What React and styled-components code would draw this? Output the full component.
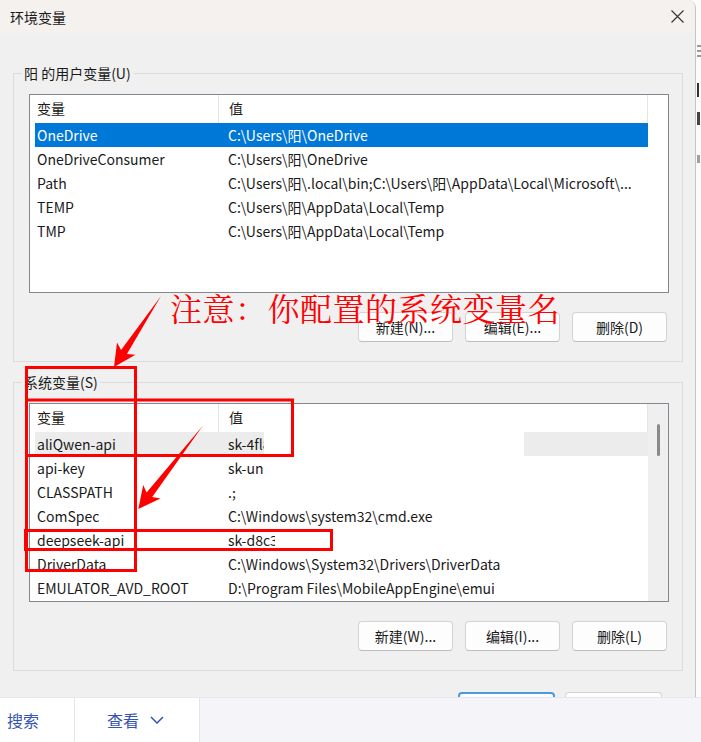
import React from "react";
import styled, { createGlobalStyle } from "styled-components";

const GlobalStyle = createGlobalStyle`
  html, body { margin: 0; padding: 0; }
  body {
    width: 701px;
    height: 742px;
    overflow: hidden;
    background: #ffffff;
    font-family: "Noto Sans CJK SC", "Noto Sans", sans-serif;
    color: #1a1a1a;
  }
  * { box-sizing: border-box; }
`;

const Page = styled.div`
  position: relative;
  width: 701px;
  height: 742px;
  display: flex;
  flex-direction: column;
  overflow: hidden;
`;

const TopRow = styled.div`
  display: flex;
  height: 697px;
  overflow: hidden;
`;

const Dialog = styled.div`
  width: 696px;
  background: #f0f0f0;
  border-right: 1px solid #c4c4c4;
  border-top-right-radius: 8px;
  display: flex;
  flex-direction: column;
  overflow: hidden;
`;

const TitleBar = styled.div`
  height: 33px;
  flex: none;
  background: #f4f1ef;
  display: flex;
  align-items: center;
  justify-content: space-between;
  padding: 0 10px 0 10px;
  font-size: 14px;
`;

const CloseIcon = styled.svg`
  width: 13px;
  height: 13px;
  margin-right: 1px;
`;

const Body = styled.div`
  padding: 30px 12px 0 13px;
  display: flex;
  flex-direction: column;
`;

const Group = styled.fieldset`
  width: 670px;
  margin: ${(p) => (p.$first ? "0" : "10px 0 0 0")};
  padding: 11px 13px 19px 15px;
  border: 1px solid #dcdcdc;
  min-width: 0;
`;

const Legend = styled.legend`
  font-size: 14px;
  line-height: 20px;
  padding: 0 2px;
  margin-left: -7px;
  color: #1a1a1a;
`;

const List = styled.div`
  width: 640px;
  height: 199px;
  border: 1px solid #828790;
  background: #ffffff;
  display: flex;
  overflow: hidden;
`;

const ListBody = styled.div`
  flex: 1;
  padding-left: 5px;
  display: flex;
  flex-direction: column;
`;

const Track = styled.div`
  width: 20px;
  flex: none;
  background: ${(p) => (p.$visible ? "#efefef" : "#ffffff")};
  display: flex;
  justify-content: center;
  padding-top: 20px;
`;

const Thumb = styled.div`
  width: 3px;
  height: 32px;
  border-radius: 2px;
  background: #8a8a8a;
  margin-left: 1px;
`;

const HeaderRow = styled.div`
  display: grid;
  grid-template-columns: 184px 429px;
  height: 28px;
  flex: none;
`;

const HeaderCell = styled.div`
  display: flex;
  align-items: center;
  padding-left: ${(p) => (p.$value ? "10px" : "2px")};
  padding-bottom: 2px;
  border-right: 1px solid #e5e5e5;
  font-size: 14px;
`;

const Row = styled.div`
  display: grid;
  grid-template-columns: 184px 429px;
  height: 24px;
  flex: none;
  align-items: center;
  font-size: 14px;
  background: ${(p) => (p.$selected ? "#0078d7" : p.$hover ? "#ececec" : "transparent")};
  color: ${(p) => (p.$selected ? "#ffffff" : "#1a1a1a")};
`;

const NameCell = styled.div`
  padding-left: 2px;
  white-space: nowrap;
  overflow: hidden;
`;

const ValueCell = styled.div`
  padding-left: 9px;
  white-space: nowrap;
  overflow: hidden;
  display: flex;
  align-items: center;
  height: 100%;
`;

const Clip = styled.span`
  display: inline-block;
  overflow: hidden;
  white-space: nowrap;
  width: ${(p) => p.$w}px;
  flex: none;
`;

const Mask = styled.span`
  display: block;
  width: 260px;
  height: 100%;
  background: #ffffff;
  flex: none;
`;

const ButtonRow = styled.div`
  display: flex;
  justify-content: flex-end;
  gap: ${(p) => p.$gap || 12}px;
  margin-top: ${(p) => p.$mt || 19}px;
  padding-right: ${(p) => p.$pr || 2}px;
`;

const Button = styled.button`
  width: ${(p) => p.$w || 95}px;
  height: 30px;
  background: #fdfdfd;
  border: ${(p) => (p.$primary ? "2px solid #4a9ae0" : "1px solid #d3d3d3")};
  border-bottom-color: ${(p) => (p.$primary ? "#4a9ae0" : "#bdbdbd")};
  border-radius: 4px;
  font-family: inherit;
  font-size: 14px;
  color: #1a1a1a;
  padding: 0;
`;

const BackStrip = styled.div`
  width: 5px;
  flex: none;
  background: #fbfbfb;
  display: flex;
  flex-direction: column;
  padding-left: 1px;
`;

const Frag = styled.div`
  margin-top: ${(p) => p.$mt}px;
  height: ${(p) => p.$h}px;
  width: ${(p) => p.$w}px;
  background: ${(p) => p.$c};
  flex: none;
`;

const BottomBar = styled.div`
  height: 45px;
  flex: none;
  display: flex;
  background: #f5f5f9;
  border-top: 1px solid #e6e6ec;
`;

const BarCell = styled.div`
  width: ${(p) => p.$w}px;
  padding-left: ${(p) => p.$pl}px;
  background: #ffffff;
  border-right: 1px solid #e6e6e6;
  display: flex;
  align-items: center;
  font-size: 16px;
  color: #3653b3;
  flex: none;
`;

const Chevron = styled.svg`
  width: 14px;
  height: 8px;
  margin-left: 11px;
`;

const Overlay = styled.svg`
  position: absolute;
  left: 0;
  top: 0;
  width: 701px;
  height: 742px;
  pointer-events: none;
`;

const Note = styled.div`
  position: absolute;
  left: 170px;
  top: 289px;
  font-size: 32px;
  line-height: 36px;
  letter-spacing: 0.5px;
  color: #ff0000;
  white-space: nowrap;
  font-family: "Noto Serif CJK SC", "Noto Sans CJK SC", serif;
  text-shadow: 0 0 1px #ffffff;
  pointer-events: none;
`;

const userVars = [
  { name: "OneDrive", value: "C:\\Users\\阳\\OneDrive", selected: true },
  { name: "OneDriveConsumer", value: "C:\\Users\\阳\\OneDrive" },
  { name: "Path", value: "C:\\Users\\阳\\.local\\bin;C:\\Users\\阳\\AppData\\Local\\Microsoft\\..." },
  { name: "TEMP", value: "C:\\Users\\阳\\AppData\\Local\\Temp" },
  { name: "TMP", value: "C:\\Users\\阳\\AppData\\Local\\Temp" },
];

const sysVars = [
  { name: "aliQwen-api", value: "sk-4fl8", hover: true, clip: 36, mask: true },
  { name: "api-key", value: "sk-un3", clip: 36 },
  { name: "CLASSPATH", value: ".;" },
  { name: "ComSpec", value: "C:\\Windows\\system32\\cmd.exe" },
  { name: "deepseek-api", value: "sk-d8c3", clip: 47 },
  { name: "DriverData", value: "C:\\Windows\\System32\\Drivers\\DriverData" },
  { name: "EMULATOR_AVD_ROOT", value: "D:\\Program Files\\MobileAppEngine\\emui" },
];

function VarList({ rows, scroll }) {
  return (
    <List>
      <ListBody>
        <HeaderRow>
          <HeaderCell>变量</HeaderCell>
          <HeaderCell $value>值</HeaderCell>
        </HeaderRow>
        {rows.map((r) => (
          <Row key={r.name} $selected={r.selected} $hover={r.hover}>
            <NameCell>{r.name}</NameCell>
            <ValueCell>
              {r.clip ? <Clip $w={r.clip}>{r.value}</Clip> : r.value}
              {r.mask && <Mask />}
            </ValueCell>
          </Row>
        ))}
      </ListBody>
      <Track $visible={scroll}>{scroll && <Thumb />}</Track>
    </List>
  );
}

export default function App() {
  return (
    <>
      <GlobalStyle />
      <Page>
        <TopRow>
          <Dialog>
            <TitleBar>
              <span>环境变量</span>
              <CloseIcon viewBox="0 0 13 13">
                <path d="M0.5 0.5 L12.5 12.5 M12.5 0.5 L0.5 12.5" stroke="#333" strokeWidth="1.1" fill="none" />
              </CloseIcon>
            </TitleBar>
            <Body>
              <Group $first>
                <Legend>阳 的用户变量(U)</Legend>
                <VarList rows={userVars} />
                <ButtonRow>
                  <Button>新建(N)...</Button>
                  <Button>编辑(E)...</Button>
                  <Button>删除(D)</Button>
                </ButtonRow>
              </Group>
              <Group>
                <Legend>系统变量(S)</Legend>
                <VarList rows={sysVars} scroll />
                <ButtonRow>
                  <Button>新建(W)...</Button>
                  <Button>编辑(I)...</Button>
                  <Button>删除(L)</Button>
                </ButtonRow>
              </Group>
              <ButtonRow $mt={21} $gap={10} $pr={21}>
                <Button $primary $w={97}>确定</Button>
                <Button $w={97}>取消</Button>
              </ButtonRow>
            </Body>
          </Dialog>
          <BackStrip>
            <Frag $mt={45} $h={2} $w={4} $c="#9a9a9a" />
            <Frag $mt={3} $h={2} $w={4} $c="#9a9a9a" />
            <Frag $mt={3} $h={2} $w={4} $c="#9a9a9a" />
            <Frag $mt={26} $h={14} $w={2} $c="#333333" />
            <Frag $mt={15} $h={13} $w={3} $c="#444444" />
            <Frag $mt={30} $h={8} $w={3} $c="#a0a0a0" />
          </BackStrip>
        </TopRow>
        <BottomBar>
          <BarCell $w={75} $pl={7}>搜索</BarCell>
          <BarCell $w={125} $pl={32}>
            查看
            <Chevron viewBox="0 0 14 8">
              <path d="M1 1 L7 7 L13 1" stroke="#3653b3" strokeWidth="1.5" fill="none" />
            </Chevron>
          </BarCell>
        </BottomBar>
        <Overlay viewBox="0 0 701 742">
          <g fill="none" stroke="#ff0000" strokeWidth="3">
            <rect x="26.5" y="367.5" width="109" height="203" />
            <rect x="26.5" y="400" width="266" height="55.5" />
            <rect x="25.5" y="530.5" width="306" height="19" />
          </g>
          <g fill="#ff0000">
            <polygon points="161,296 126.9,353.9 135.4,354.7 114,367 117,342.5 121.1,350.1" />
            <polygon points="203,425.5 152.2,497 160.5,498.5 138.3,509 143.2,484.9 146.6,492.6" />
          </g>
        </Overlay>
        <Note>注意：你配置的系统变量名</Note>
      </Page>
    </>
  );
}
